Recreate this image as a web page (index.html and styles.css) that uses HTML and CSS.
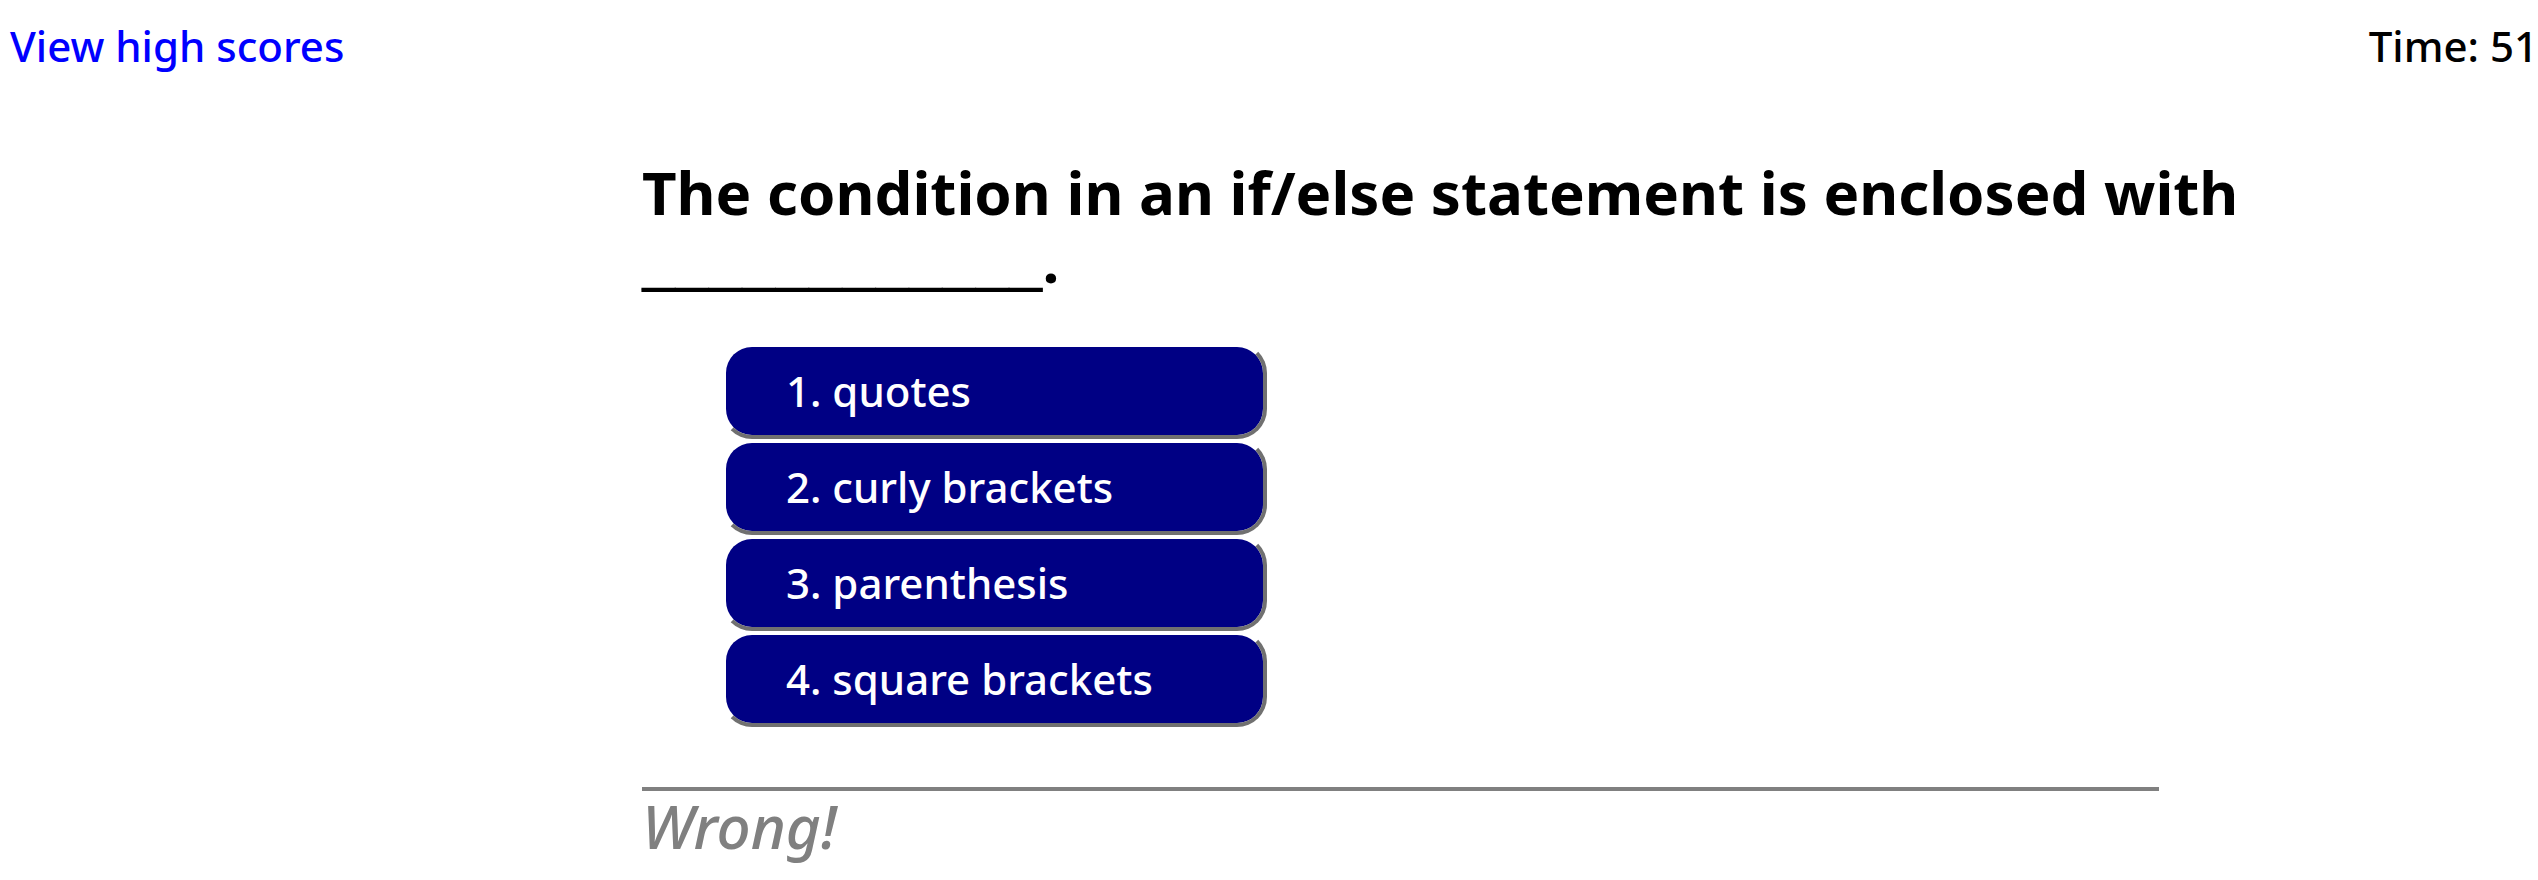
FILE: index.html
```html
<!DOCTYPE html>
<html lang="en">
<head>
<meta charset="utf-8">
<title>Code Quiz</title>
<link rel="stylesheet" href="styles.css">
</head>
<body>
<header class="topbar">
<a class="scores" href="#scores">View high scores</a>
<div class="timer">Time: <span>51</span></div>
</header>
<main class="quiz">
<h1 class="question">The condition in an if/else statement is enclosed with <span class="blank">____________</span>.</h1>
<div class="choices">
<button class="choice" type="button">1. quotes</button>
<button class="choice" type="button">2. curly brackets</button>
<button class="choice" type="button">3. parenthesis</button>
<button class="choice" type="button">4. square brackets</button>
</div>
<p class="feedback">Wrong!</p>
</main>
</body>
</html>
```
FILE: styles.css
```css
body {
  margin: 0;
  padding-bottom: 12px;
  background: #fff;
  color: #000;
  font-family: "Noto Sans", "Open Sans", sans-serif;
  font-size: 42px;
  font-weight: 500;
  line-height: 60px;
}
.topbar {
  display: flex;
  justify-content: space-between;
  padding: 16px 0 0 10px;
}
.scores {
  color: #00f;
  text-decoration: none;
}
.quiz {
  margin: 82px 254px 0 642px;
}
.question {
  margin: 0;
  font-size: 60px;
  font-weight: 700;
  line-height: 68px;
}
.blank {
  font-family: "Liberation Sans", Arial, sans-serif;
  line-height: 1;
  text-shadow: 0 2px 0 #000;
}
.choices {
  display: flex;
  flex-direction: column;
  align-items: flex-start;
  padding: 49px 80px 60px;
}
.choice {
  width: 545px;
  height: 96px;
  padding: 0 60px;
  border: 4px solid transparent;
  border-right-color: #707070;
  border-bottom-color: #707070;
  border-radius: 30px;
  background: #000084;
  background-clip: padding-box;
  color: #fff;
  font: inherit;
  text-align: left;
}
.feedback {
  max-width: 1517px;
  margin: 0;
  border-top: 4px solid #808080;
  color: #808080;
  font-size: 60px;
  font-style: italic;
  line-height: 70px;
}
```
